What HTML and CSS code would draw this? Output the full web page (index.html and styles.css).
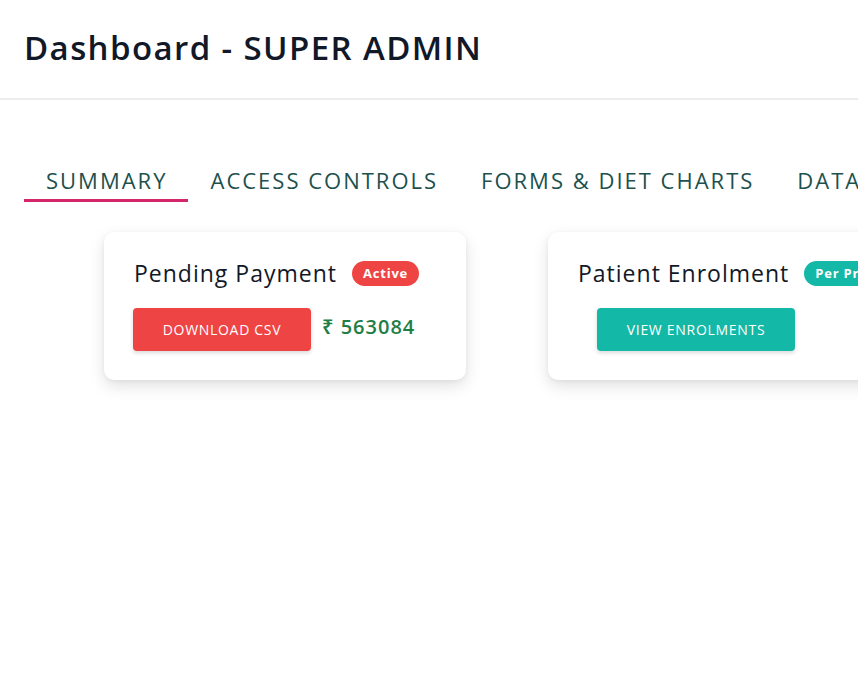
FILE: index.html
```html
<!DOCTYPE html>
<html lang="en">
<head>
<meta charset="utf-8">
<title>Dashboard - SUPER ADMIN</title>
<link rel="stylesheet" href="styles.css">
</head>
<body>
<header class="header">
  <h1 class="title">Dashboard - SUPER ADMIN</h1>
</header>
<main class="main">
  <nav class="tabs">
    <div class="tab active">SUMMARY</div>
    <div class="tab">ACCESS CONTROLS</div>
    <div class="tab">FORMS &amp; DIET CHARTS</div>
    <div class="tab">DATA</div>
  </nav>
  <section class="cards">
    <div class="card">
      <div class="card-head">
        <span class="card-title">Pending Payment</span>
        <span class="badge badge-red">Active</span>
      </div>
      <div class="card-row">
        <button class="btn btn-red">DOWNLOAD CSV</button>
        <span class="amount">₹ 563084</span>
      </div>
    </div>
    <div class="card">
      <div class="card-head">
        <span class="card-title">Patient Enrolment</span>
        <span class="badge badge-teal">Per Program</span>
      </div>
      <div class="card-row card-row-indent">
        <button class="btn btn-teal">VIEW ENROLMENTS</button>
      </div>
    </div>
  </section>
</main>
</body>
</html>
```
FILE: styles.css
```css
html, body {
  margin: 0;
  padding: 0;
  background: #ffffff;
  overflow: hidden;
  width: 858px;
  height: 686px;
}
body {
  font-family: "Open Sans", "Noto Sans", sans-serif;
  color: #111827;
}
.header {
  height: 98px;
  border-bottom: 2px solid #ececec;
  box-sizing: content-box;
  display: flex;
  align-items: center;
  padding-left: 24px;
}
.title {
  margin: 0;
  font-size: 33px;
  font-weight: 600;
  color: #111827;
  letter-spacing: 1.4px;
  margin-top: -4px;
}
.main {
  padding: 62px 0 0 24px;
}
.tabs {
  display: flex;
  white-space: nowrap;
}
.tab {
  padding: 4px 21px 5px 22px;
  font-size: 22px;
  color: #1c514d;
  border-bottom: 3px solid transparent;
  line-height: 28px;
  letter-spacing: 2px;
}
.tab.active {
  border-bottom-color: #d6266b;
}
.cards {
  display: flex;
  gap: 82px;
  padding: 30px 0 0 80px;
}
.card {
  flex: 0 0 362px;
  box-sizing: border-box;
  height: 148px;
  border-radius: 10px;
  background: #fff;
  box-shadow: 0 6px 16px rgba(0,0,0,0.12), 0 1px 4px rgba(0,0,0,0.05);
  padding: 25px 30px 0;
}
.card-head {
  display: flex;
  align-items: center;
  gap: 15px;
  white-space: nowrap;
}
.card-title {
  font-size: 23px;
  color: #111827;
  line-height: 32px;
  letter-spacing: 1px;
}
.badge {
  display: inline-block;
  font-size: 13px;
  font-weight: 700;
  color: #fff;
  padding: 2px 11px;
  border-radius: 13px;
  line-height: 21px;
  letter-spacing: 0.8px;
}
.badge-red { background: #ef4444; }
.badge-teal { background: #14b8a6; }
.card-row {
  display: flex;
  align-items: center;
  gap: 11px;
  margin-top: 19px;
}
.card-row-indent {
  padding-left: 19px;
}
.btn {
  border: none;
  border-radius: 4px;
  color: #fff;
  font-family: inherit;
  font-size: 14px;
  letter-spacing: 0.7px;
  height: 43px;
  padding: 0;
  box-shadow: 0 2px 4px rgba(0,0,0,0.15);
}
.btn-red { background: #ef4444; width: 178px; margin-left: -1px; }
.btn-teal { background: #14b8a6; width: 198px; }
.amount {
  font-size: 20px;
  font-weight: 600;
  color: #1e7e45;
  letter-spacing: 1px;
  margin-top: -6px;
}
```
